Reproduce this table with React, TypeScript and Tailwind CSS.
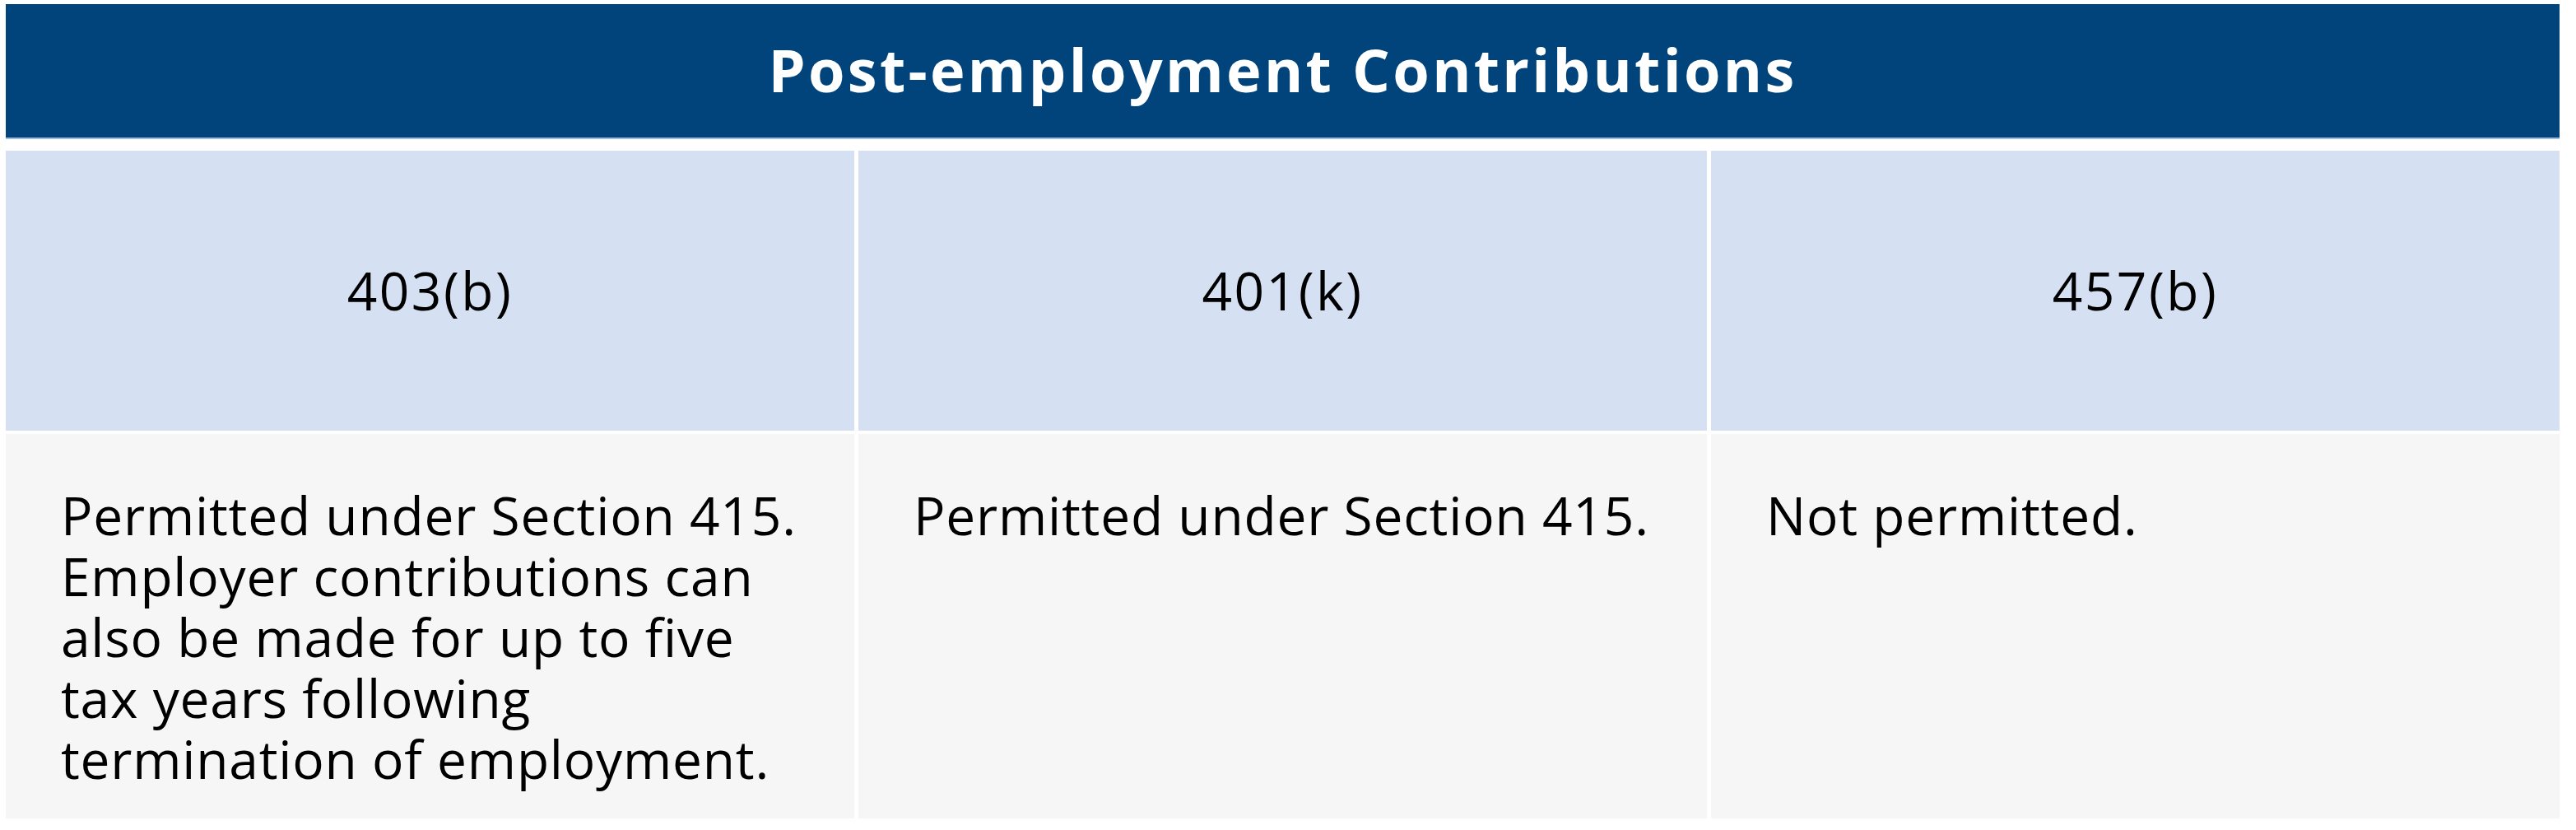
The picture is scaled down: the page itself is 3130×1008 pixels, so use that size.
import React from "react";

const cols = [
  {
    head: "403(b)",
    body: "Permitted under Section 415. Employer contributions can also be made for up to five tax years following termination of employment.",
  },
  { head: "401(k)", body: "Permitted under Section 415." },
  { head: "457(b)", body: "Not permitted." },
];

export default function App() {
  return (
    <div
      className="w-[3130px] h-[1008px] bg-white pt-[5px] pl-[7px] pr-[20px]"
      style={{ fontFamily: '"Open Sans", "Noto Sans", sans-serif' }}
    >
      <div className="h-[164px] bg-[#01447b] border-b-2 border-[#9fbbe0] flex items-center justify-center">
        <h1 className="text-white font-bold text-[72px] leading-none tracking-[3.3px] mt-[-4px]">
          Post-employment Contributions
        </h1>
      </div>
      <div className="mt-[14px] grid grid-cols-3 gap-x-[5px] gap-y-[4px]">
        {cols.map((c) => (
          <div
            key={c.head}
            className="h-[340px] bg-[#d5e0f3] flex items-center justify-center text-black text-[64px] leading-none tracking-[2.5px]"
          >
            {c.head}
          </div>
        ))}
        {cols.map((c) => (
          <div key={c.head + "b"} className="h-[467px] bg-[#f6f6f6] pl-[67px] pt-[62px]">
            <p className="w-[912px] text-black text-[64px] leading-[74px] tracking-[0.8px]">{c.body}</p>
          </div>
        ))}
      </div>
    </div>
  );
}
